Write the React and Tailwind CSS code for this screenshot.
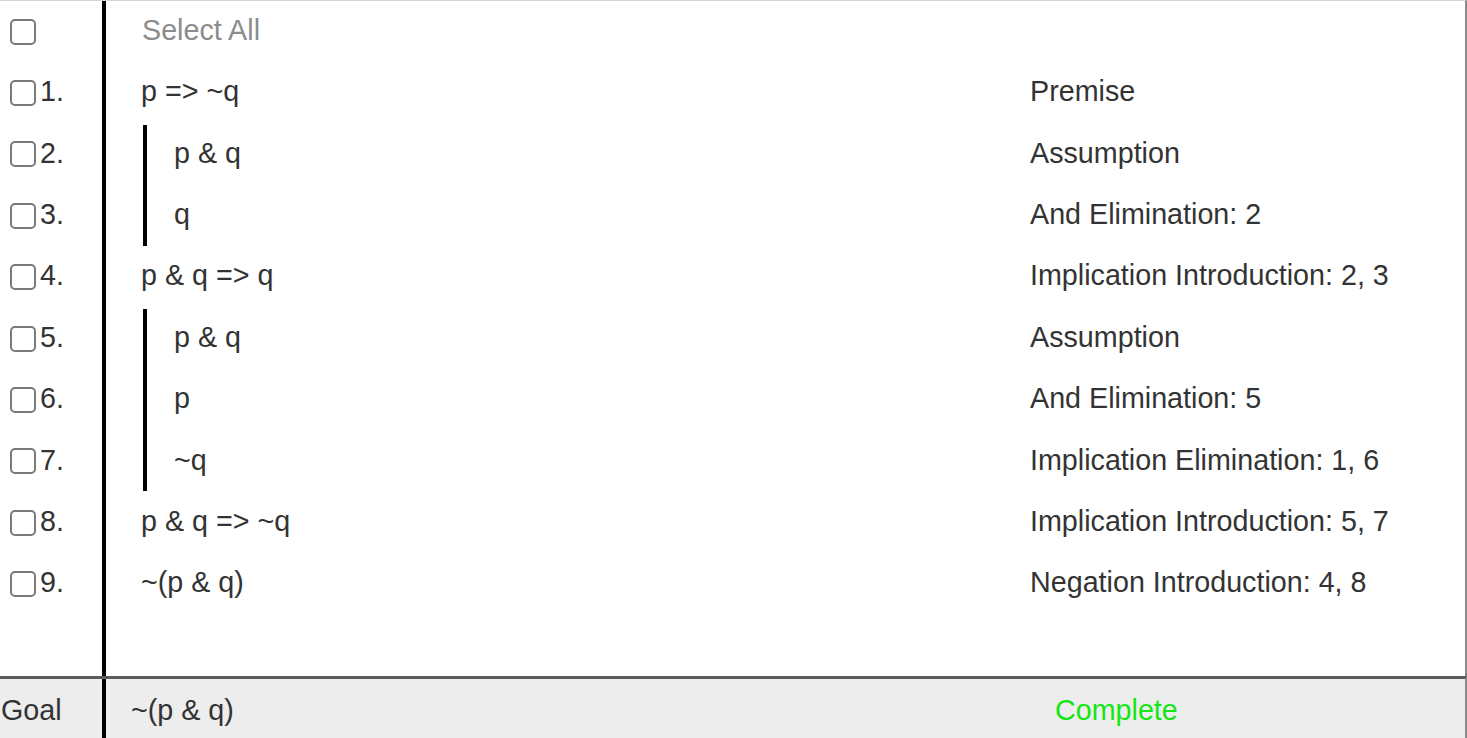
const LINES = [
  { n: 1, f: "p => ~q", j: "Premise", depth: 0 },
  { n: 2, f: "p & q", j: "Assumption", depth: 1, bar: "first" },
  { n: 3, f: "q", j: "And Elimination: 2", depth: 1, bar: "last" },
  { n: 4, f: "p & q => q", j: "Implication Introduction: 2, 3", depth: 0 },
  { n: 5, f: "p & q", j: "Assumption", depth: 1, bar: "first" },
  { n: 6, f: "p", j: "And Elimination: 5", depth: 1, bar: "mid" },
  { n: 7, f: "~q", j: "Implication Elimination: 1, 6", depth: 1, bar: "last" },
  { n: 8, f: "p & q => ~q", j: "Implication Introduction: 5, 7", depth: 0 },
  { n: 9, f: "~(p & q)", j: "Negation Introduction: 4, 8", depth: 0 },
]

const Box = () => (
  <span className="inline-block h-[26px] w-[26px] shrink-0 rounded-[5px] border-2 border-[#7a7a7a] bg-white" />
)

export default function App() {
  return (
    <div
      className="flex h-[738px] w-[1467px] flex-col overflow-hidden bg-white text-[28.7px] leading-none text-[#333]"
      style={{ fontFamily: '"Liberation Sans", Arial, sans-serif' }}
    >
      {/* proof body */}
      <div className="flex flex-1 border-t border-r-2 border-t-[#d4d4d4] border-r-[#8a8a8a]">
        {/* checkbox column */}
        <div className="w-[106px] shrink-0 border-r-4 border-black">
          <div className="flex h-[61.4px] items-center pl-[10px]">
            <Box />
          </div>
          {LINES.map((l) => (
            <div key={l.n} className="flex h-[61.4px] items-center gap-[4px] pl-[10px]">
              <Box />
              <span className="pb-[3px]">{l.n}.</span>
            </div>
          ))}
        </div>

        {/* formula + justification */}
        <div className="flex-1">
          <div className="flex h-[61.4px] items-center pb-[2px] pl-[36px] text-[#8c8c8c]">Select All</div>
          {LINES.map((l) => (
            <div key={l.n} className="flex h-[61.4px] items-stretch">
              <div className="flex w-[925px] shrink-0 items-stretch pl-[37px]">
                {l.depth > 0 ? (
                  <>
                    <div
                      className={
                        l.bar === "first"
                          ? "mt-[1px] w-[4px] bg-black"
                          : l.bar === "last"
                          ? "mb-[1px] w-[4px] bg-black"
                          : "w-[4px] bg-black"
                      }
                    />
                    <div className="flex items-center pb-[3px] pl-[27px]">{l.f}</div>
                  </>
                ) : (
                  <div className="-ml-[2px] flex items-center pb-[3px]">{l.f}</div>
                )}
              </div>
              <div className="-ml-[1px] flex items-center pb-[3px]">{l.j}</div>
            </div>
          ))}
        </div>
      </div>

      {/* goal row */}
      <div className="flex h-[62px] border-t-[3px] border-r-2 border-t-[#5a5a5a] border-r-[#8a8a8a] bg-[#ededed]">
        <div className="flex w-[106px] shrink-0 items-center border-r-4 border-black pt-[3px] pl-[1px]">Goal</div>
        <div className="flex w-[949px] shrink-0 items-center pt-[3px] pl-[25px]">~(p &amp; q)</div>
        <div className="flex items-center pt-[3px] text-[#14e614]">Complete</div>
      </div>
    </div>
  )
}
